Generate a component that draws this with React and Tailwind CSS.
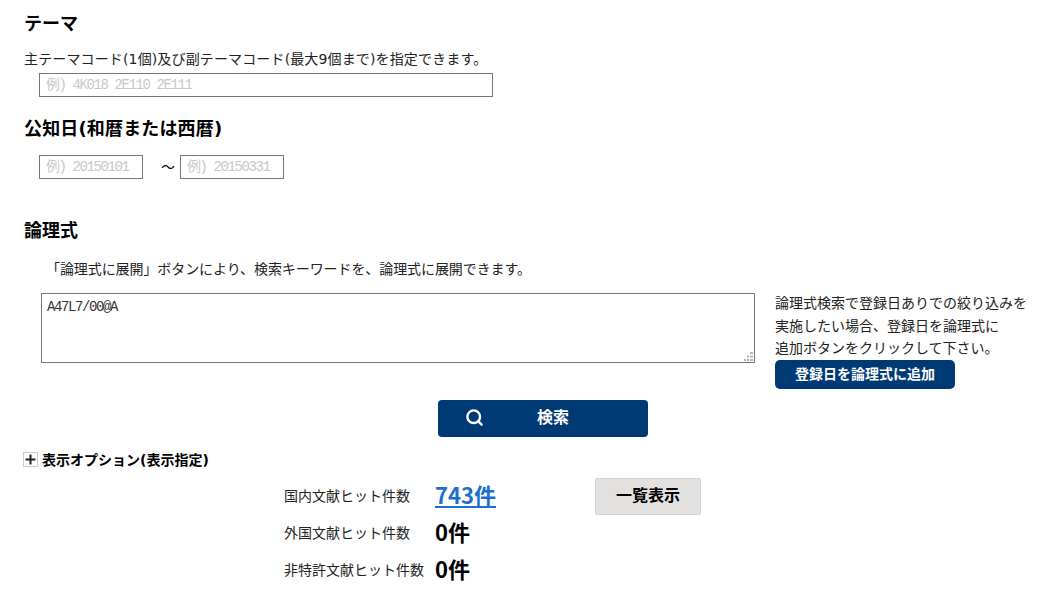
import { Search } from 'lucide-react';

const font = "font-['DejaVu_Sans','Noto_Sans_CJK_JP',sans-serif]";

const DateInput = ({ placeholder }) => (
  <input
    type="text"
    placeholder={placeholder}
    className="w-[104px] h-6 px-1.5 border border-[#767676] text-sm tracking-[-1.4px] font-['Liberation_Mono','Noto_Sans_CJK_JP',monospace] placeholder:text-[#c8c8c8] outline-none"
  />
);

const ResultRow = ({ label, count, href }) => (
  <div className="flex items-center h-[37px]">
    <span className="w-[151px] text-sm text-[#222] whitespace-nowrap">{label}</span>
    {href ? (
      <a href={href} className="mb-1 text-[22px] font-bold font-['Noto_Sans_CJK_JP',sans-serif] text-[#1a6fd0] underline">{count}</a>
    ) : (
      <span className="mb-1 text-[22px] font-bold font-['Noto_Sans_CJK_JP',sans-serif] text-black">{count}</span>
    )}
  </div>
);

export default function App() {
  return (
    <div className={`${font} w-[1043px] h-[606px] overflow-hidden bg-white text-black pt-[13px] pl-6`}>
      <h2 className="text-lg leading-[22px] font-bold">テーマ</h2>
      <p className="mt-[13px] text-sm leading-[22px] tracking-[0.14px] text-[#222]">主テーマコード(1個)及び副テーマコード(最大9個まで)を指定できます。</p>
      <input
        type="text"
        placeholder="例) 4K018 2E110 2E111"
        className="block mt-[3px] ml-[15px] w-[454px] h-6 px-1.5 border border-[#767676] text-sm tracking-[-1.4px] font-['Liberation_Mono','Noto_Sans_CJK_JP',monospace] placeholder:text-[#c8c8c8] outline-none"
      />

      <h2 className="mt-[21px] text-lg leading-[22px] tracking-[0.15px] font-bold">公知日(和暦または西暦)</h2>
      <div className="mt-[15px] ml-[15px] flex items-center">
        <DateInput placeholder="例) 20150101" />
        <span className="ml-[18px] w-[19px] text-sm">～</span>
        <DateInput placeholder="例) 20150331" />
      </div>

      <h2 className="mt-[41px] text-lg leading-[22px] font-bold">論理式</h2>
      <p className="mt-[16px] ml-[22px] text-sm leading-[22px] tracking-[-0.08px] text-[#222]">「論理式に展開」ボタンにより、検索キーワードを、論理式に展開できます。</p>

      <div className="mt-[13px] ml-[17px] flex items-start">
        <div className="relative">
          <textarea
            defaultValue="A47L7/00@A"
            className="block w-[714px] h-[70px] px-[5px] py-[3px] border border-[#767676] resize-none text-sm tracking-[-1.4px] font-['Liberation_Mono',monospace] text-[#333] outline-none"
          />
          <svg viewBox="0 0 9 9" className="absolute right-[2px] bottom-[2px] w-[9px] h-[9px] text-[#b5b5b5]">
            <path d="M6 0h3v2H6zM3 3.5h2v2H3zM6 3.5h3v2H6zM0 7h2v2H0zM3 7h2v2H3zM6 7h3v2H6z" fill="currentColor" />
          </svg>
        </div>
        <div className="ml-5 -mt-px">
          <p className="text-sm leading-[22.5px] text-[#222] whitespace-nowrap">
            論理式検索で登録日ありでの絞り込みを<br />実施したい場合、登録日を論理式に<br />追加ボタンをクリックして下さい。
          </p>
          <button className="block w-[180px] h-[29px] rounded-[5px] bg-[#003a75] text-white text-sm font-bold">
            登録日を論理式に追加
          </button>
        </div>
      </div>

      <button className="relative block mt-[11px] ml-[414px] w-[210px] h-[37px] rounded-[4px] bg-[#003a75] text-white text-base font-bold">
        <Search className="absolute left-[27px] top-[8px] w-[19px] h-[19px]" strokeWidth={3} />
        <span className="pl-[20px]">検索</span>
      </button>

      <div className="mt-[14px] -ml-px flex items-center h-[18px]">
        <span className="flex items-center justify-center w-[15px] h-[15px] border border-[#cccccc] text-[#222]">
          <svg viewBox="0 0 11 11" className="w-[11px] h-[11px]">
            <path d="M4.500 0.500h2v4H10.500v2H6.500V10.500h-2V6.500H0.500v-2h4z" fill="currentColor" />
          </svg>
        </span>
        <span className="ml-1 text-sm font-bold">表示オプション(表示指定)</span>
      </div>

      <div className="mt-[9px] ml-[260px] flex items-start">
        <div className="w-[311px]">
          <ResultRow label="国内文献ヒット件数" count="743件" href="#" />
          <ResultRow label="外国文献ヒット件数" count="0件" />
          <ResultRow label="非特許文献ヒット件数" count="0件" />
        </div>
        <button className="w-[106px] h-[37px] rounded-[2px] bg-[#e3e0e0] border border-[#d4d2d2] text-base font-bold text-black">
          一覧表示
        </button>
      </div>
    </div>
  );
}
